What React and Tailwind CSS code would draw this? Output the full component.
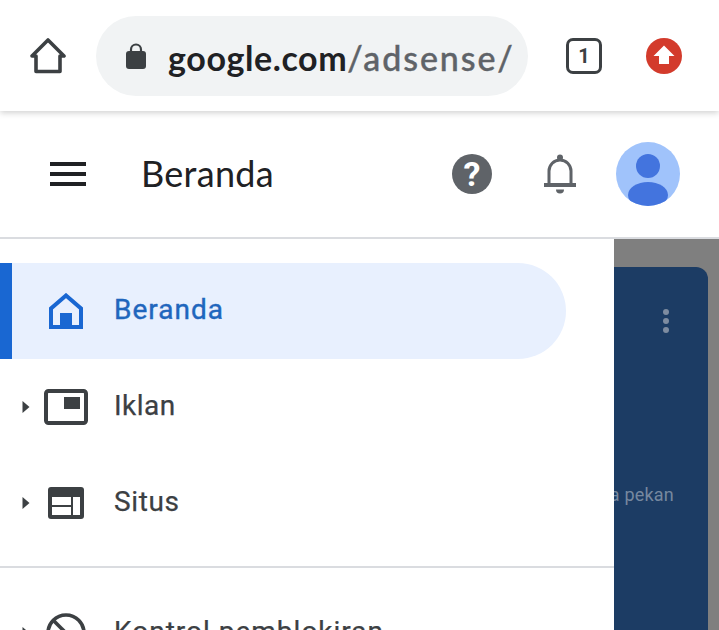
function HomeOutline() {
  return (
    <svg width="36" height="36" viewBox="0 0 36 36" fill="none" stroke="#3c4043" strokeWidth="3.6" strokeLinejoin="round" strokeLinecap="round">
      <path d="M2 18 18 2 34 18H30V33.5H6V18Z" />
    </svg>
  );
}

function Lock() {
  return (
    <svg width="20" height="26" viewBox="0 0 20 26">
      <path d="M5 9V6.5a5 5 0 0 1 10 0V9" fill="none" stroke="#3c4043" strokeWidth="2.2" />
      <rect x="0" y="8" width="20" height="18" rx="3" fill="#3c4043" />
    </svg>
  );
}

function TabCount() {
  return (
    <div className="flex h-9 w-9 items-center justify-center rounded-[7px] border-[3px] border-[#3c4043] text-[20px] font-bold leading-none text-[#3c4043]">
      1
    </div>
  );
}

function UpdateBadge() {
  return (
    <svg width="36" height="36" viewBox="0 0 36 36">
      <circle cx="18" cy="18" r="18" fill="#d33b2c" />
      <path d="M18 7.5 28.5 18H23V26H13V18H7.5Z" fill="#fff" />
    </svg>
  );
}

function Hamburger() {
  return (
    <div className="flex h-6 w-9 flex-col justify-between">
      <div className="h-1 bg-[#202124]" />
      <div className="h-1 bg-[#202124]" />
      <div className="h-1 bg-[#202124]" />
    </div>
  );
}

function HelpIcon() {
  return (
    <div className="flex h-10 w-10 items-center justify-center rounded-full bg-[#5f6368] text-[34px] font-bold leading-none text-white">
      ?
    </div>
  );
}

function Bell() {
  return (
    <svg width="32" height="40" viewBox="0 0 32 40" fill="none">
      <circle cx="16" cy="3.5" r="3" fill="#5f6368" />
      <path d="M5 31V17a11 11 0 0 1 22 0V31" stroke="#5f6368" strokeWidth="3" />
      <path d="M0 31H32" stroke="#5f6368" strokeWidth="4" />
      <path d="M12 35.5h8a4 4 0 0 1-8 0Z" fill="#5f6368" />
    </svg>
  );
}

function Avatar() {
  return (
    <svg width="64" height="64" viewBox="0 0 64 64">
      <defs>
        <clipPath id="avatar-clip">
          <circle cx="32" cy="32" r="32" />
        </clipPath>
      </defs>
      <circle cx="32" cy="32" r="32" fill="#a0c3fb" />
      <circle cx="32" cy="24" r="12" fill="#4374de" />
      <ellipse cx="32" cy="53" rx="20" ry="13" fill="#4374de" clipPath="url(#avatar-clip)" />
    </svg>
  );
}

function Caret() {
  return (
    <svg width="8" height="14" viewBox="0 0 8 14">
      <path d="M0.5 1 7.5 7 0.5 13Z" fill="#3c4043" />
    </svg>
  );
}

function HomeFilled() {
  return (
    <svg width="34" height="36" viewBox="0 0 34 36" fill="none">
      <path d="M2 34V15.5L17 2.5 32 15.5V34Z" stroke="#1967d2" strokeWidth="4" strokeLinejoin="miter" />
      <rect x="11" y="20" width="12" height="14" fill="#1967d2" />
    </svg>
  );
}

function AdsIcon() {
  return (
    <svg width="44" height="36" viewBox="0 0 44 36" fill="none">
      <rect x="2" y="2" width="40" height="32" rx="2.5" stroke="#3c4043" strokeWidth="4" />
      <rect x="20" y="8" width="16" height="12" fill="#3c4043" />
    </svg>
  );
}

function SitesIcon() {
  return (
    <svg width="36" height="32" viewBox="0 0 36 32">
      <rect width="36" height="32" rx="3" fill="#3c4043" />
      <rect x="4" y="10" width="19" height="8" fill="#fff" />
      <rect x="4" y="20" width="19" height="8" fill="#fff" />
      <rect x="25" y="10" width="7" height="18" fill="#fff" />
    </svg>
  );
}

function BlockIcon() {
  return (
    <svg width="40" height="40" viewBox="0 0 40 40" fill="none" stroke="#3c4043" strokeWidth="3.6">
      <circle cx="20" cy="20" r="18" />
      <path d="M7 7 33 33" />
    </svg>
  );
}

function NavRow({ icon, label, labelClass }) {
  return (
    <div className="flex h-24 items-center">
      <div className="flex w-[44px] shrink-0 justify-end pr-[14px]">
        <Caret />
      </div>
      <div className="flex w-[44px] shrink-0 justify-center">{icon}</div>
      <span className={"ml-[26px] -translate-y-px whitespace-nowrap text-[28px] text-[#3c4043] [-webkit-text-stroke:0.25px_#3c4043] " + labelClass}>{label}</span>
    </div>
  );
}

export default function App() {
  return (
    <div className="flex h-[630px] w-[719px] flex-col overflow-hidden bg-white font-['Roboto',sans-serif]">
      <header className="relative z-10 flex h-[111px] shrink-0 items-center bg-white pl-[30px] shadow-[0_2px_6px_rgba(0,0,0,0.18)]">
        <HomeOutline />
        <div className="ml-[30px] flex h-20 w-[432px] items-center rounded-full bg-[#f1f3f4] pl-[30px]">
          <Lock />
          <span className="ml-[22px] mt-[4px] whitespace-nowrap font-['Lato',sans-serif] text-[34px] font-medium leading-none">
            <span className="font-bold tracking-[0.6px] text-[#202124]">google.com</span>
            <span className="tracking-[1.9px] text-[#5f6368] [-webkit-text-stroke:0.4px_#5f6368]">/adsense/</span>
          </span>
        </div>
        <div className="ml-[38px]">
          <TabCount />
        </div>
        <div className="ml-[44px] flex">
          <UpdateBadge />
        </div>
      </header>

      <div className="flex h-[128px] shrink-0 items-center border-b-2 border-[#dadce0] pl-[50px] pr-[39px]">
        <Hamburger />
        <h1 className="ml-[55px] -translate-y-px font-['Lato',sans-serif] text-[36px] font-normal tracking-[0.3px] text-[#202124]">Beranda</h1>
        <div className="ml-auto">
          <HelpIcon />
        </div>
        <div className="ml-[52px] flex">
          <Bell />
        </div>
        <div className="ml-[40px] flex">
          <Avatar />
        </div>
      </div>

      <div className="flex min-h-0 flex-1">
        <aside className="w-[614px] shrink-0 bg-white pt-[24px]">
          <div className="flex h-24 w-[566px] items-center rounded-r-[48px] border-l-[12px] border-[#1967d2] bg-[#e8f0fe]">
            <div className="ml-[37px] flex">
              <HomeFilled />
            </div>
            <span className="ml-[31px] -translate-y-px text-[28px] tracking-[1px] text-[#1f66bd] [-webkit-text-stroke:0.4px_#1f66bd]">Beranda</span>
          </div>
          <NavRow icon={<AdsIcon />} label="Iklan" labelClass="tracking-[0.5px]" />
          <NavRow icon={<SitesIcon />} label="Situs" labelClass="tracking-[0.6px]" />
          <div className="mt-[15px] h-0.5 bg-[#dadce0]" />
          <div className="mt-[17px]">
            <NavRow icon={<BlockIcon />} label="Kontrol pemblokiran" labelClass="tracking-[1px]" />
          </div>
        </aside>

        <main className="min-w-0 flex-1 bg-[#7f7f7f] pr-[11px] pt-[28px]">
          <div className="h-[400px] overflow-hidden rounded-tr-[12px] bg-[#1c3c64]">
            <div className="flex justify-end pr-[39px] pt-[42px]">
              <div className="flex flex-col gap-[3px]">
                <div className="h-[6px] w-[6px] rounded-full bg-[#7e8ca0]" />
                <div className="h-[6px] w-[6px] rounded-full bg-[#7e8ca0]" />
                <div className="h-[6px] w-[6px] rounded-full bg-[#7e8ca0]" />
              </div>
            </div>
            <div className="mt-[148px] flex justify-end whitespace-nowrap pr-[34px] text-[18px] tracking-[0.2px] text-[#76889f]">
              a pekan
            </div>
          </div>
        </main>
      </div>
    </div>
  );
}
